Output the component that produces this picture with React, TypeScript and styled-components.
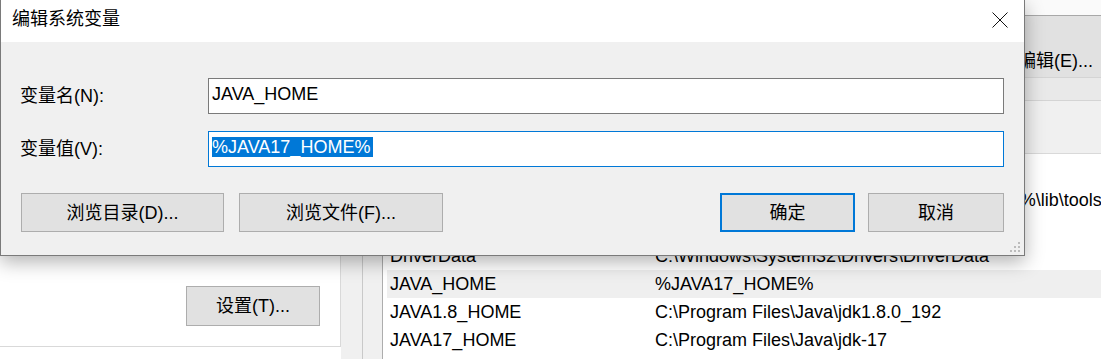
import React from "react";
import styled, { createGlobalStyle } from "styled-components";

const GlobalStyle = createGlobalStyle`
  html, body {
    margin: 0;
    padding: 0;
    background: #fff;
  }
  body {
    font-family: "Liberation Sans", "Noto Sans CJK SC", sans-serif;
    font-size: 18px;
    color: #000;
  }
  * {
    box-sizing: border-box;
  }
`;

const Screen = styled.div`
  position: relative;
  width: 1101px;
  height: 359px;
  overflow: hidden;
  display: flex;
`;

/* ---- window behind: system properties ---- */
const SysPane = styled.div`
  width: 341px;
  flex: none;
  background: #fff;
`;

const TabPage = styled.div`
  height: 347px;
  border-right: 1px solid #d9d9d9;
  border-bottom: 1px solid #d9d9d9;
  display: flex;
  align-items: flex-end;
  justify-content: flex-end;
  padding: 0 20px 20px 0;
`;

const GapStrip = styled.div`
  width: 22px;
  flex: none;
  background: #f0f0f0;
  border-right: 1px solid #c9c9c9;
`;

/* ---- window behind: environment variables ---- */
const EnvPane = styled.div`
  flex: 1;
  min-width: 0;
  background: #f0f0f0;
  display: flex;
  flex-direction: column;
`;

const Band = styled.div<{ $h: number; $bg: string; $line?: string }>`
  height: ${(p) => p.$h}px;
  flex: none;
  background: ${(p) => p.$bg};
  border-top: ${(p) => (p.$line ? `1px solid ${p.$line}` : "none")};
  display: flex;
  white-space: nowrap;
`;

const BandButtons = styled.div`
  display: flex;
  gap: 15px;
  padding: 33px 0 0 475px;
  line-height: 24px;
`;

const BandButton = styled.div`
  width: 135px;
  flex: none;
  text-align: center;
`;

const ListArea = styled.div`
  flex: 1;
  padding-left: 19px;
  display: flex;
`;

const ListBox = styled.div`
  flex: 1;
  background: #fff;
  border-left: 1px solid #adadad;
  border-top: 1px solid #d9d9d9;
  padding-top: 4px;
`;

const ListRow = styled.div<{ $selected?: boolean }>`
  height: 28px;
  margin-left: 4px;
  padding-left: 3px;
  display: grid;
  grid-template-columns: 265px 1fr;
  align-items: center;
  line-height: 24px;
  white-space: nowrap;
  background: ${(p) => (p.$selected ? "#efefef" : "transparent")};
`;

/* ---- shared button look ---- */
const WinButton = styled.div<{ $w: number; $h: number; $primary?: boolean }>`
  width: ${(p) => p.$w}px;
  height: ${(p) => p.$h}px;
  flex: none;
  background: #e1e1e1;
  border: ${(p) => (p.$primary ? "2px solid #0078d7" : "1px solid #adadad")};
  display: flex;
  align-items: center;
  justify-content: center;
  line-height: 24px;
  white-space: nowrap;
`;

/* ---- the edit dialog on top ---- */
const Dialog = styled.div`
  position: absolute;
  left: 0;
  top: 0;
  width: 1025px;
  height: 256px;
  border: 1px solid #7a7a7a;
  border-top: none;
  background: #f0f0f0;
  box-shadow: 0 6px 18px rgba(0, 0, 0, 0.3);
  display: flex;
  flex-direction: column;
`;

const TitleBar = styled.div`
  height: 42px;
  flex: none;
  background: #fff;
  display: flex;
  align-items: flex-start;
  justify-content: space-between;
  padding: 0 16px 0 11px;
`;

const Title = styled.div`
  padding-top: 7px;
  line-height: 24px;
`;

const CloseIcon = styled.svg`
  margin-top: 12px;
  display: block;
`;

const Body = styled.div`
  flex: 1;
  padding: 36px 20px 0 19px;
`;

const Fields = styled.div`
  display: grid;
  grid-template-columns: 188px 1fr;
  grid-auto-rows: 36px;
  row-gap: 17px;
  align-items: center;
`;

const Label = styled.div`
  line-height: 24px;
`;

const TextBox = styled.div<{ $focused?: boolean }>`
  height: 36px;
  background: #fff;
  border: 1px solid ${(p) => (p.$focused ? "#0078d7" : "#7a7a7a")};
  padding: 3px 0 0 3px;
  line-height: 24px;
  white-space: nowrap;
`;

const Selected = styled.span`
  background: #0078d7;
  color: #fff;
  padding-right: 3px;
`;

const ButtonBar = styled.div`
  margin-top: 26px;
  display: flex;
  justify-content: space-between;
`;

const ButtonGroup = styled.div<{ $gap: number }>`
  display: flex;
  gap: ${(p) => p.$gap}px;
  margin-left: 1px;
`;

const Grip = styled.svg`
  position: absolute;
  right: 3px;
  bottom: 2px;
`;

const rows = [
  { name: "ChocolateyInstall", value: "C:\\ProgramData\\chocolatey" },
  { name: "CLASSPATH", value: ".;%JAVA_HOME%\\jre\\lib\\rt.jar;%JAVA_HOME%\\lib\\tools.jar" },
  { name: "ComSpec", value: "C:\\Windows\\system32\\cmd.exe" },
  { name: "DriverData", value: "C:\\Windows\\System32\\Drivers\\DriverData" },
  { name: "JAVA_HOME", value: "%JAVA17_HOME%", selected: true },
  { name: "JAVA1.8_HOME", value: "C:\\Program Files\\Java\\jdk1.8.0_192" },
  { name: "JAVA17_HOME", value: "C:\\Program Files\\Java\\jdk-17" },
];

const App = () => {
  return (
    <>
      <GlobalStyle />
      <Screen>
        <SysPane>
          <TabPage>
            <WinButton $w={134} $h={40}>设置(T)...</WinButton>
          </TabPage>
        </SysPane>
        <GapStrip />
        <EnvPane>
          <Band $h={15} $bg="#fafafa" />
          <Band $h={62} $bg="#e1e1e1" $line="#a8a8a8">
            <BandButtons>
              <BandButton>新建(W)...</BandButton>
              <BandButton>编辑(E)...</BandButton>
            </BandButtons>
          </Band>
          <Band $h={23} $bg="#e9e9e9" $line="#d4d4d4" />
          <Band $h={53} $bg="#f0f0f0" $line="#d4d4d4" />
          <ListArea>
            <ListBox>
              {rows.map((r) => (
                <ListRow key={r.name} $selected={r.selected}>
                  <span>{r.name}</span>
                  <span>{r.value}</span>
                </ListRow>
              ))}
            </ListBox>
          </ListArea>
        </EnvPane>

        <Dialog>
          <TitleBar>
            <Title>编辑系统变量</Title>
            <CloseIcon width="16" height="16" viewBox="0 0 16 16">
              <path d="M0.5 0.5 L15.5 15.5 M15.5 0.5 L0.5 15.5" stroke="#111" strokeWidth="1" fill="none" />
            </CloseIcon>
          </TitleBar>
          <Body>
            <Fields>
              <Label>变量名(N):</Label>
              <TextBox>JAVA_HOME</TextBox>
              <Label>变量值(V):</Label>
              <TextBox $focused>
                <Selected>%JAVA17_HOME%</Selected>
              </TextBox>
            </Fields>
            <ButtonBar>
              <ButtonGroup $gap={15}>
                <WinButton $w={203} $h={39}>浏览目录(D)...</WinButton>
                <WinButton $w={204} $h={39}>浏览文件(F)...</WinButton>
              </ButtonGroup>
              <ButtonGroup $gap={13}>
                <WinButton $w={135} $h={39} $primary>确定</WinButton>
                <WinButton $w={136} $h={39}>取消</WinButton>
              </ButtonGroup>
            </ButtonBar>
          </Body>
          <Grip width="12" height="12" viewBox="0 0 12 12">
            <g fill="#bcbcbc">
              <rect x="9" y="1" width="2" height="2" />
              <rect x="5" y="5" width="2" height="2" />
              <rect x="9" y="5" width="2" height="2" />
              <rect x="1" y="9" width="2" height="2" />
              <rect x="5" y="9" width="2" height="2" />
              <rect x="9" y="9" width="2" height="2" />
            </g>
          </Grip>
        </Dialog>
      </Screen>
    </>
  );
};

export default App;
